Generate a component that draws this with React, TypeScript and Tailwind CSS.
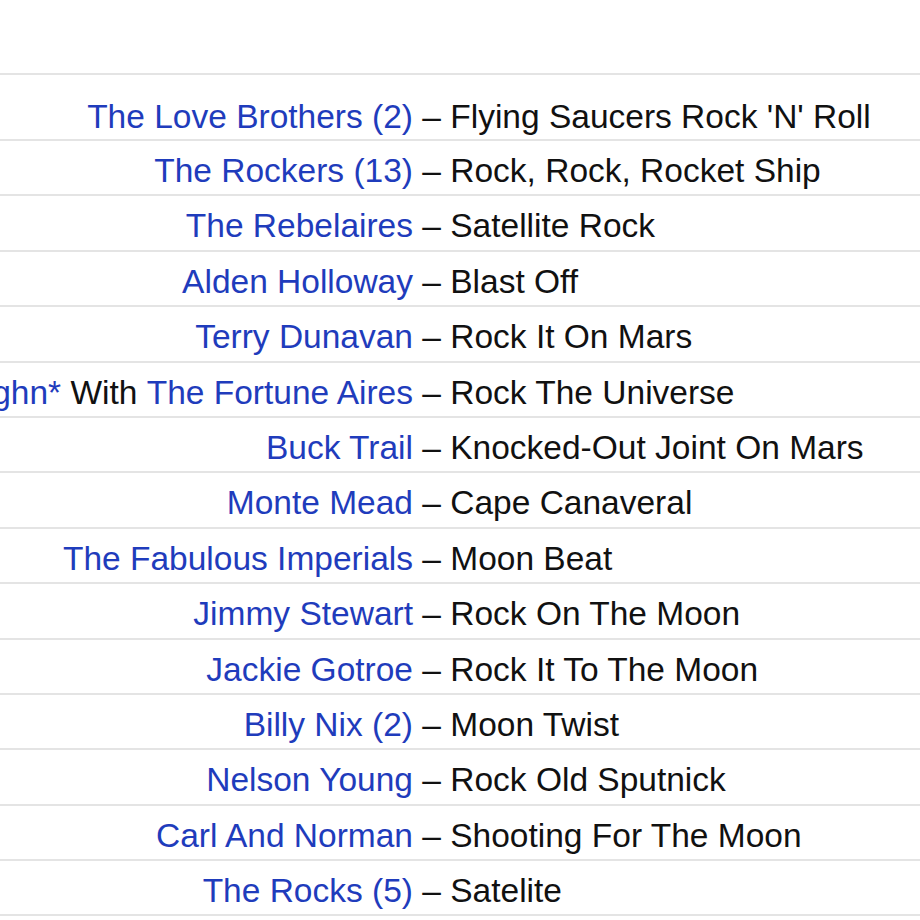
import React from "react";

type Part = { t: string; link?: boolean };
type Row = { artist: Part[]; title: string };

const rows: Row[] = [
  { artist: [{ t: "The Love Brothers (2)", link: true }], title: "Flying Saucers Rock 'N' Roll" },
  { artist: [{ t: "The Rockers (13)", link: true }], title: "Rock, Rock, Rocket Ship" },
  { artist: [{ t: "The Rebelaires", link: true }], title: "Satellite Rock" },
  { artist: [{ t: "Alden Holloway", link: true }], title: "Blast Off" },
  { artist: [{ t: "Terry Dunavan", link: true }], title: "Rock It On Mars" },
  {
    artist: [
      { t: "Bill Vaughn*", link: true },
      { t: " With " },
      { t: "The Fortune Aires", link: true },
    ],
    title: "Rock The Universe",
  },
  { artist: [{ t: "Buck Trail", link: true }], title: "Knocked-Out Joint On Mars" },
  { artist: [{ t: "Monte Mead", link: true }], title: "Cape Canaveral" },
  { artist: [{ t: "The Fabulous Imperials", link: true }], title: "Moon Beat" },
  { artist: [{ t: "Jimmy Stewart", link: true }], title: "Rock On The Moon" },
  { artist: [{ t: "Jackie Gotroe", link: true }], title: "Rock It To The Moon" },
  { artist: [{ t: "Billy Nix (2)", link: true }], title: "Moon Twist" },
  { artist: [{ t: "Nelson Young", link: true }], title: "Rock Old Sputnick" },
  { artist: [{ t: "Carl And Norman", link: true }], title: "Shooting For The Moon" },
  { artist: [{ t: "The Rocks (5)", link: true }], title: "Satelite" },
];

export default function App() {
  return (
    <div
      className="w-[920px] h-[920px] overflow-hidden bg-white text-[33.5px] text-[#111]"
      style={{ fontFamily: '"Liberation Sans", Arial, Helvetica, sans-serif' }}
    >
      <div className="h-[75px] border-b-2 border-[#e4e4e4]" />
      {rows.map((r, i) => (
        <div
          key={i}
          className={`flex border-b-2 border-[#e4e4e4] ${
            i === 0 ? "h-[66px] pt-[20px]" : "h-[55.4px] pt-[7px]"
          }`}
        >
          <div className="w-[413px] shrink-0 flex justify-end items-center whitespace-pre">
            {r.artist.map((p, j) => (
              <span key={j} className={p.link ? "text-[#1f3cbc]" : ""}>
                {p.t}
              </span>
            ))}
          </div>
          <div className="flex items-center whitespace-pre">
            <span>{" – " + r.title}</span>
          </div>
        </div>
      ))}
    </div>
  );
}
